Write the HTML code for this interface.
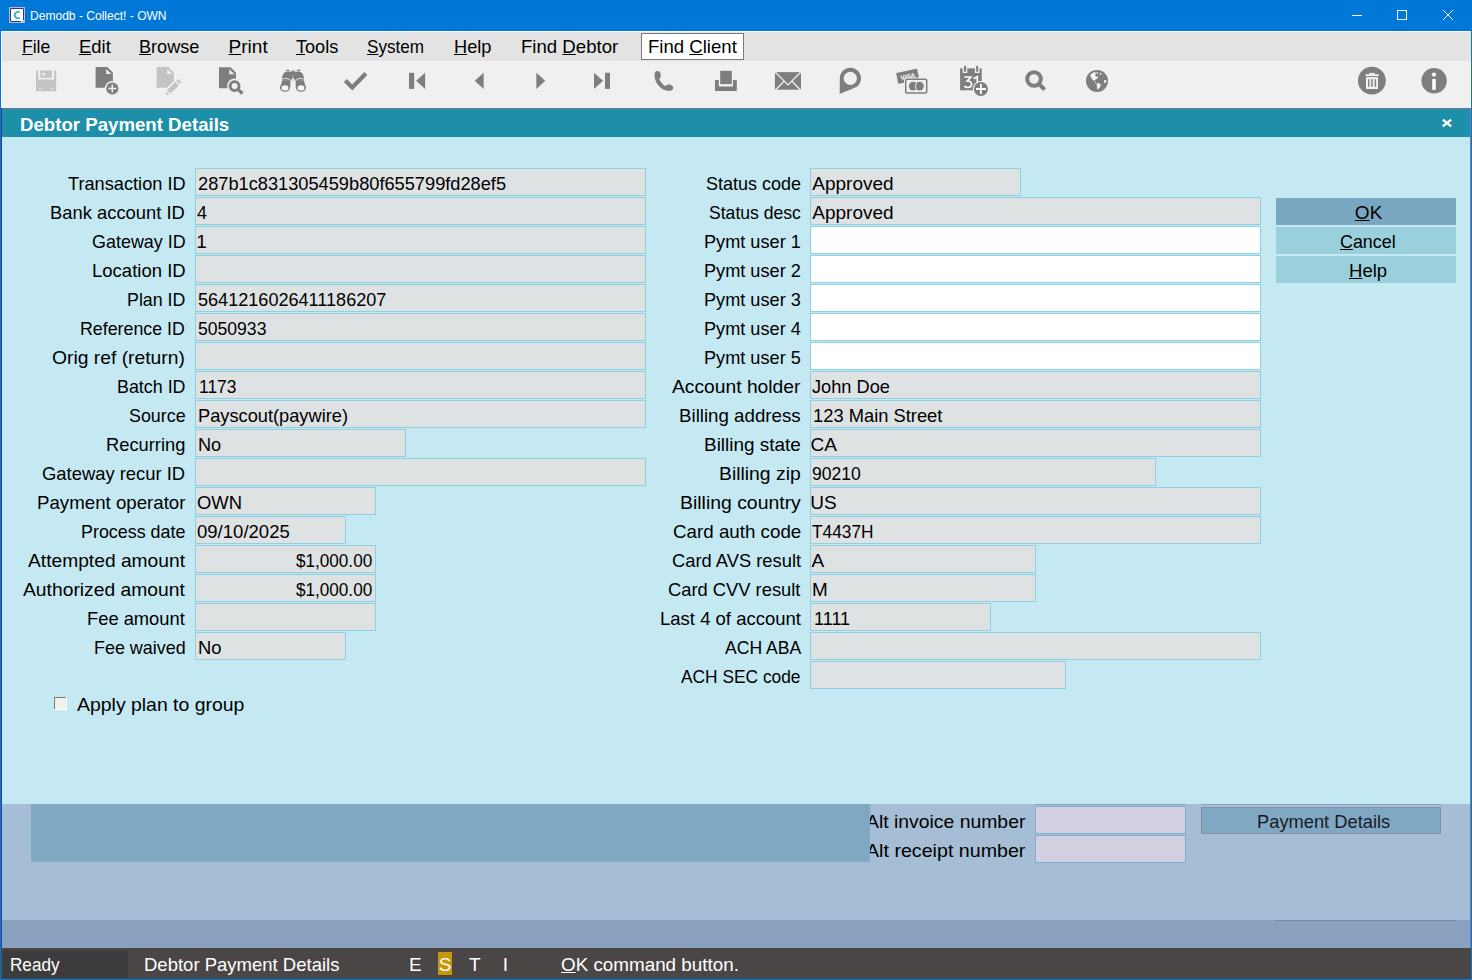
<!DOCTYPE html>
<html><head><meta charset="utf-8"><style>
html,body{margin:0;padding:0;width:1472px;height:980px;overflow:hidden;background:#c5e9f2;}
body{position:relative;font-family:"Liberation Sans", sans-serif;}
body>div,body>svg{position:absolute;}
.t{white-space:pre;line-height:24px;transform-origin:0 0;}
u{text-decoration:underline;text-underline-offset:1px;}
</style></head><body>
<div style="left:0px;top:0px;width:1472px;height:31px;background:#0078d7;"></div>
<svg style="left:9px;top:7px" width="16" height="16" viewBox="0 0 16 16"><rect x="0" y="0" width="16" height="16" fill="#ffffff"/><rect x="0.5" y="0.5" width="15" height="15" fill="none" stroke="#b9b9d6" stroke-width="1"/><path d="M1.5 13 V1.5 H14.5 V13.2 M1.5 12 V14.5 H12.2" fill="none" stroke="#2c3b7c" stroke-width="1"/><path d="M10.7 5.5 A3.15 3.15 0 1 0 10.7 10.7" fill="none" stroke="#3aaebe" stroke-width="1.7"/><rect x="13.5" y="13.5" width="1.2" height="1.2" fill="#45b5c5"/></svg>
<div class="t" style="left:30.20px;top:4.43px;font-size:13.2px;color:#fff;transform:scaleX(0.9136);">Demodb - Collect! - OWN</div>
<svg style="left:1340px;top:0px" width="132" height="31"><g stroke="#fff" stroke-width="1" fill="none"><line x1="12" y1="15.5" x2="22" y2="15.5"/><rect x="57.5" y="10.5" width="9" height="9"/><line x1="103" y1="10" x2="113" y2="20"/><line x1="113" y1="10" x2="103" y2="20"/></g></svg>
<div style="left:1px;top:31px;width:1470px;height:1px;background:#fbf7f5;"></div>
<div style="left:1px;top:32px;width:1470px;height:29px;background:#e3e3e3;"></div>
<div style="left:1px;top:32px;width:1px;height:29px;background:#fbf7f5;"></div>
<div style="left:641px;top:33px;width:103px;height:27px;background:#fff;border:1px solid #7a7a7a;box-sizing:border-box"></div>
<div class="t" style="left:22.10px;top:35.42px;font-size:19px;color:#000;transform:scaleX(0.9237);"><u>F</u>ile</div>
<div class="t" style="left:79.20px;top:35.42px;font-size:19px;color:#000;transform:scaleX(0.9717);"><u>E</u>dit</div>
<div class="t" style="left:139.20px;top:35.42px;font-size:19px;color:#000;transform:scaleX(0.9532);"><u>B</u>rowse</div>
<div class="t" style="left:228.60px;top:35.42px;font-size:19px;color:#000;"><u>P</u>rint</div>
<div class="t" style="left:296.10px;top:35.42px;font-size:19px;color:#000;transform:scaleX(0.9512);"><u>T</u>ools</div>
<div class="t" style="left:367.40px;top:35.42px;font-size:19px;color:#000;transform:scaleX(0.9011);"><u>S</u>ystem</div>
<div class="t" style="left:453.60px;top:35.42px;font-size:19px;color:#000;transform:scaleX(0.9593);"><u>H</u>elp</div>
<div class="t" style="left:521.00px;top:35.42px;font-size:19px;color:#000;transform:scaleX(0.9791);">Find <u>D</u>ebtor</div>
<div class="t" style="left:647.90px;top:35.42px;font-size:19px;color:#000;transform:scaleX(0.9778);">Find <u>C</u>lient</div>
<div style="left:1px;top:61px;width:1470px;height:47px;background:#f0f0f0;"></div>
<div style="left:1px;top:61px;width:1px;height:47px;background:#fbf7f5;"></div>
<div style="left:1470px;top:61px;width:1px;height:47px;background:#fbf7f5;"></div>
<div style="left:1px;top:108px;width:1470px;height:1px;background:#7c6f9a;"></div>
<div style="left:1px;top:109px;width:1469px;height:28px;background:#1e8fa8;"></div>
<div class="t" style="left:20.10px;top:113.42px;font-size:19px;color:#fff;font-weight:bold;transform:scaleX(0.9809);">Debtor Payment Details</div>
<svg style="left:1440px;top:117px" width="14" height="12"><g stroke="#fff" stroke-width="2.4"><line x1="2.8" y1="2.6" x2="11.2" y2="9.4"/><line x1="11.2" y1="2.6" x2="2.8" y2="9.4"/></g></svg>
<div style="left:1px;top:137px;width:1469px;height:667px;background:#c5e9f2;"></div>
<div style="left:195px;top:168px;width:451px;height:28px;background:#dfe2e3;border:1px solid #8fd0e0;box-sizing:border-box"></div>
<div class="t" style="left:67.60px;top:172.42px;font-size:19px;color:#000;transform:scaleX(0.9574);">Transaction ID</div>
<div class="t" style="left:198.00px;top:172.42px;font-size:19px;color:#000;transform:scaleX(0.9591);">287b1c831305459b80f655799fd28ef5</div>
<div style="left:195px;top:197px;width:451px;height:28px;background:#dfe2e3;border:1px solid #8fd0e0;box-sizing:border-box"></div>
<div class="t" style="left:50.40px;top:201.42px;font-size:19px;color:#000;transform:scaleX(0.9669);">Bank account ID</div>
<div class="t" style="left:196.90px;top:201.42px;font-size:19px;color:#000;transform:scaleX(0.9388);">4</div>
<div style="left:195px;top:226px;width:451px;height:28px;background:#dfe2e3;border:1px solid #8fd0e0;box-sizing:border-box"></div>
<div class="t" style="left:91.50px;top:230.42px;font-size:19px;color:#000;transform:scaleX(0.9438);">Gateway ID</div>
<div class="t" style="left:196.13px;top:230.42px;font-size:19px;color:#000;">1</div>
<div style="left:195px;top:255px;width:451px;height:28px;background:#dfe2e3;border:1px solid #8fd0e0;box-sizing:border-box"></div>
<div class="t" style="left:91.50px;top:259.42px;font-size:19px;color:#000;transform:scaleX(0.9746);">Location ID</div>
<div style="left:195px;top:284px;width:451px;height:28px;background:#dfe2e3;border:1px solid #8fd0e0;box-sizing:border-box"></div>
<div class="t" style="left:126.80px;top:288.42px;font-size:19px;color:#000;transform:scaleX(0.9371);">Plan ID</div>
<div class="t" style="left:198.00px;top:288.42px;font-size:19px;color:#000;transform:scaleX(0.9516);">5641216026411186207</div>
<div style="left:195px;top:313px;width:451px;height:28px;background:#dfe2e3;border:1px solid #8fd0e0;box-sizing:border-box"></div>
<div class="t" style="left:80.40px;top:317.42px;font-size:19px;color:#000;transform:scaleX(0.9361);">Reference ID</div>
<div class="t" style="left:198.00px;top:317.42px;font-size:19px;color:#000;transform:scaleX(0.9249);">5050933</div>
<div style="left:195px;top:342px;width:451px;height:28px;background:#dfe2e3;border:1px solid #8fd0e0;box-sizing:border-box"></div>
<div class="t" style="left:52.30px;top:346.42px;font-size:19px;color:#000;transform:scaleX(1.0152);">Orig ref (return)</div>
<div style="left:195px;top:371px;width:451px;height:28px;background:#dfe2e3;border:1px solid #8fd0e0;box-sizing:border-box"></div>
<div class="t" style="left:116.70px;top:375.42px;font-size:19px;color:#000;transform:scaleX(0.9401);">Batch ID</div>
<div class="t" style="left:198.60px;top:375.42px;font-size:19px;color:#000;transform:scaleX(0.9155);">1173</div>
<div style="left:195px;top:400px;width:451px;height:28px;background:#dfe2e3;border:1px solid #8fd0e0;box-sizing:border-box"></div>
<div class="t" style="left:128.60px;top:404.42px;font-size:19px;color:#000;transform:scaleX(0.9405);">Source</div>
<div class="t" style="left:198.00px;top:404.42px;font-size:19px;color:#000;transform:scaleX(0.9598);">Payscout(paywire)</div>
<div style="left:195px;top:429px;width:211px;height:28px;background:#dfe2e3;border:1px solid #8fd0e0;box-sizing:border-box"></div>
<div class="t" style="left:105.80px;top:433.42px;font-size:19px;color:#000;transform:scaleX(0.9640);">Recurring</div>
<div class="t" style="left:198.00px;top:433.42px;font-size:19px;color:#000;transform:scaleX(0.9558);">No</div>
<div style="left:195px;top:458px;width:451px;height:28px;background:#dfe2e3;border:1px solid #8fd0e0;box-sizing:border-box"></div>
<div class="t" style="left:42.10px;top:462.42px;font-size:19px;color:#000;transform:scaleX(0.9681);">Gateway recur ID</div>
<div style="left:195px;top:487px;width:181px;height:28px;background:#dfe2e3;border:1px solid #8fd0e0;box-sizing:border-box"></div>
<div class="t" style="left:36.70px;top:491.42px;font-size:19px;color:#000;transform:scaleX(0.9831);">Payment operator</div>
<div class="t" style="left:197.30px;top:491.42px;font-size:19px;color:#000;transform:scaleX(0.9687);">OWN</div>
<div style="left:195px;top:516px;width:151px;height:28px;background:#dfe2e3;border:1px solid #8fd0e0;box-sizing:border-box"></div>
<div class="t" style="left:80.80px;top:520.42px;font-size:19px;color:#000;transform:scaleX(0.9413);">Process date</div>
<div class="t" style="left:197.30px;top:520.42px;font-size:19px;color:#000;transform:scaleX(0.9759);">09/10/2025</div>
<div style="left:195px;top:545px;width:181px;height:28px;background:#dfe2e3;border:1px solid #8fd0e0;box-sizing:border-box"></div>
<div class="t" style="left:28.20px;top:549.42px;font-size:19px;color:#000;transform:scaleX(1.0111);">Attempted amount</div>
<div class="t" style="left:296.20px;top:549.42px;font-size:19px;color:#000;transform:scaleX(0.9012);">$1,000.00</div>
<div style="left:195px;top:574px;width:181px;height:28px;background:#dfe2e3;border:1px solid #8fd0e0;box-sizing:border-box"></div>
<div class="t" style="left:23.30px;top:578.42px;font-size:19px;color:#000;transform:scaleX(1.0150);">Authorized amount</div>
<div class="t" style="left:296.20px;top:578.42px;font-size:19px;color:#000;transform:scaleX(0.9012);">$1,000.00</div>
<div style="left:195px;top:603px;width:181px;height:28px;background:#dfe2e3;border:1px solid #8fd0e0;box-sizing:border-box"></div>
<div class="t" style="left:87.40px;top:607.42px;font-size:19px;color:#000;transform:scaleX(0.9644);">Fee amount</div>
<div style="left:195px;top:632px;width:151px;height:28px;background:#dfe2e3;border:1px solid #8fd0e0;box-sizing:border-box"></div>
<div class="t" style="left:93.50px;top:636.42px;font-size:19px;color:#000;transform:scaleX(0.9436);">Fee waived</div>
<div class="t" style="left:197.70px;top:636.42px;font-size:19px;color:#000;transform:scaleX(0.9682);">No</div>
<div style="left:810px;top:168px;width:211px;height:28px;background:#dfe2e3;border:1px solid #8fd0e0;box-sizing:border-box"></div>
<div class="t" style="left:705.70px;top:172.42px;font-size:19px;color:#000;transform:scaleX(0.9475);">Status code</div>
<div class="t" style="left:812.30px;top:172.42px;font-size:19px;color:#000;">Approved</div>
<div style="left:810px;top:197px;width:451px;height:28px;background:#dfe2e3;border:1px solid #8fd0e0;box-sizing:border-box"></div>
<div class="t" style="left:708.90px;top:201.42px;font-size:19px;color:#000;transform:scaleX(0.9257);">Status desc</div>
<div class="t" style="left:812.30px;top:201.42px;font-size:19px;color:#000;">Approved</div>
<div style="left:810px;top:226px;width:451px;height:28px;background:#ffffff;border:1px solid #8fd0e0;box-sizing:border-box"></div>
<div class="t" style="left:704.00px;top:230.42px;font-size:19px;color:#000;transform:scaleX(0.9550);">Pymt user 1</div>
<div style="left:810px;top:255px;width:451px;height:28px;background:#ffffff;border:1px solid #8fd0e0;box-sizing:border-box"></div>
<div class="t" style="left:704.00px;top:259.42px;font-size:19px;color:#000;transform:scaleX(0.9550);">Pymt user 2</div>
<div style="left:810px;top:284px;width:451px;height:28px;background:#ffffff;border:1px solid #8fd0e0;box-sizing:border-box"></div>
<div class="t" style="left:704.00px;top:288.42px;font-size:19px;color:#000;transform:scaleX(0.9550);">Pymt user 3</div>
<div style="left:810px;top:313px;width:451px;height:28px;background:#ffffff;border:1px solid #8fd0e0;box-sizing:border-box"></div>
<div class="t" style="left:704.00px;top:317.42px;font-size:19px;color:#000;transform:scaleX(0.9550);">Pymt user 4</div>
<div style="left:810px;top:342px;width:451px;height:28px;background:#ffffff;border:1px solid #8fd0e0;box-sizing:border-box"></div>
<div class="t" style="left:704.00px;top:346.42px;font-size:19px;color:#000;transform:scaleX(0.9550);">Pymt user 5</div>
<div style="left:810px;top:371px;width:451px;height:28px;background:#dfe2e3;border:1px solid #8fd0e0;box-sizing:border-box"></div>
<div class="t" style="left:672.40px;top:375.42px;font-size:19px;color:#000;transform:scaleX(1.0132);">Account holder</div>
<div class="t" style="left:812.40px;top:375.42px;font-size:19px;color:#000;transform:scaleX(0.9579);">John Doe</div>
<div style="left:810px;top:400px;width:451px;height:28px;background:#dfe2e3;border:1px solid #8fd0e0;box-sizing:border-box"></div>
<div class="t" style="left:679.20px;top:404.42px;font-size:19px;color:#000;transform:scaleX(0.9842);">Billing address</div>
<div class="t" style="left:813.30px;top:404.42px;font-size:19px;color:#000;transform:scaleX(0.9647);">123 Main Street</div>
<div style="left:810px;top:429px;width:451px;height:28px;background:#dfe2e3;border:1px solid #8fd0e0;box-sizing:border-box"></div>
<div class="t" style="left:703.90px;top:433.42px;font-size:19px;color:#000;transform:scaleX(0.9971);">Billing state</div>
<div class="t" style="left:810.59px;top:433.42px;font-size:19px;color:#000;">CA</div>
<div style="left:810px;top:458px;width:346px;height:28px;background:#dfe2e3;border:1px solid #8fd0e0;box-sizing:border-box"></div>
<div class="t" style="left:719.10px;top:462.42px;font-size:19px;color:#000;transform:scaleX(1.0178);">Billing zip</div>
<div class="t" style="left:812.40px;top:462.42px;font-size:19px;color:#000;transform:scaleX(0.9239);">90210</div>
<div style="left:810px;top:487px;width:451px;height:28px;background:#dfe2e3;border:1px solid #8fd0e0;box-sizing:border-box"></div>
<div class="t" style="left:680.00px;top:491.42px;font-size:19px;color:#000;transform:scaleX(1.0213);">Billing country</div>
<div class="t" style="left:810.29px;top:491.42px;font-size:19px;color:#000;">US</div>
<div style="left:810px;top:516px;width:451px;height:28px;background:#dfe2e3;border:1px solid #8fd0e0;box-sizing:border-box"></div>
<div class="t" style="left:672.50px;top:520.42px;font-size:19px;color:#000;transform:scaleX(0.9876);">Card auth code</div>
<div class="t" style="left:812.40px;top:520.42px;font-size:19px;color:#000;transform:scaleX(0.9113);">T4437H</div>
<div style="left:810px;top:545px;width:226px;height:28px;background:#dfe2e3;border:1px solid #8fd0e0;box-sizing:border-box"></div>
<div class="t" style="left:671.70px;top:549.42px;font-size:19px;color:#000;transform:scaleX(0.9652);">Card AVS result</div>
<div class="t" style="left:811.50px;top:549.42px;font-size:19px;color:#000;">A</div>
<div style="left:810px;top:574px;width:226px;height:28px;background:#dfe2e3;border:1px solid #8fd0e0;box-sizing:border-box"></div>
<div class="t" style="left:668.40px;top:578.42px;font-size:19px;color:#000;transform:scaleX(0.9645);">Card CVV result</div>
<div class="t" style="left:812.40px;top:578.42px;font-size:19px;color:#000;transform:scaleX(0.9926);">M</div>
<div style="left:810px;top:603px;width:181px;height:28px;background:#dfe2e3;border:1px solid #8fd0e0;box-sizing:border-box"></div>
<div class="t" style="left:659.80px;top:607.42px;font-size:19px;color:#000;transform:scaleX(0.9742);">Last 4 of account</div>
<div class="t" style="left:813.90px;top:607.42px;font-size:19px;color:#000;transform:scaleX(0.9488);">1111</div>
<div style="left:810px;top:632px;width:451px;height:28px;background:#dfe2e3;border:1px solid #8fd0e0;box-sizing:border-box"></div>
<div class="t" style="left:724.60px;top:636.42px;font-size:19px;color:#000;transform:scaleX(0.9252);">ACH ABA</div>
<div style="left:810px;top:661px;width:256px;height:28px;background:#dfe2e3;border:1px solid #8fd0e0;box-sizing:border-box"></div>
<div class="t" style="left:681.30px;top:665.42px;font-size:19px;color:#000;transform:scaleX(0.9125);">ACH SEC code</div>
<div style="left:1276px;top:198px;width:180px;height:27px;background:#79a7c1;"></div>
<div class="t" style="left:1354.87px;top:201.42px;font-size:19px;color:#000;"><u>O</u>K</div>
<div style="left:1276px;top:227px;width:180px;height:27px;background:#9acfdc;"></div>
<div class="t" style="left:1340.30px;top:230.42px;font-size:19px;color:#000;transform:scaleX(0.9402);"><u>C</u>ancel</div>
<div style="left:1276px;top:256px;width:180px;height:27px;background:#9acfdc;"></div>
<div class="t" style="left:1349.20px;top:259.42px;font-size:19px;color:#000;transform:scaleX(0.9746);"><u>H</u>elp</div>
<svg style="left:54px;top:697px" width="13" height="13"><rect x="0" y="0" width="13" height="13" fill="#ffffff"/><rect x="0" y="0" width="12" height="12" fill="#7a7a7a"/><rect x="1" y="1" width="11" height="11" fill="#f0f0f0"/></svg>
<div class="t" style="left:77.10px;top:693.42px;font-size:19px;color:#000;transform:scaleX(1.0224);">Apply plan to group</div>
<div style="left:1px;top:804px;width:1469px;height:116px;background:#a5bed6;"></div>
<div class="t" style="left:865.80px;top:810.42px;font-size:19px;color:#000;transform:scaleX(1.0197);">Alt invoice number</div>
<div class="t" style="left:865.80px;top:839.42px;font-size:19px;color:#000;transform:scaleX(1.0338);">Alt receipt number</div>
<div style="left:31px;top:804px;width:839px;height:58px;background:#80a8c3;"></div>
<div style="left:1035px;top:804px;width:151px;height:1px;background:#7fa6c2;"></div>
<div style="left:1035px;top:806px;width:151px;height:28px;background:#d2d0e0;border:1px solid #7fb0cc;box-sizing:border-box"></div>
<div style="left:1035px;top:835px;width:151px;height:28px;background:#d2d0e0;border:1px solid #7fb0cc;box-sizing:border-box"></div>
<div style="left:1201px;top:804px;width:240px;height:1px;background:#7fa6c2;"></div>
<div style="left:1201px;top:807px;width:240px;height:27px;background:#80a8c3;border:1px solid #8c8aa4;box-sizing:border-box"></div>
<div class="t" style="left:1256.80px;top:810.42px;font-size:19px;color:#1a1a2a;transform:scaleX(0.9630);">Payment Details</div>
<div style="left:1px;top:920px;width:1469px;height:28px;background:#8ba1c0;"></div>
<div style="left:1275px;top:920px;width:181px;height:1px;background:#6f8db0;"></div>
<div style="left:1px;top:948px;width:1470px;height:31px;background:#4a4646;"></div>
<div style="left:3px;top:950px;width:125px;height:28px;background:#3d3c3d;"></div>
<div class="t" style="left:9.60px;top:953.42px;font-size:19px;color:#fff;transform:scaleX(0.9015);">Ready</div>
<div class="t" style="left:144.30px;top:953.42px;font-size:19px;color:#fff;transform:scaleX(0.9739);">Debtor Payment Details</div>
<div style="left:438px;top:952px;width:14px;height:23px;background:#c8960a;"></div>
<div class="t" style="left:408.96px;top:953.42px;font-size:19px;color:#fff;">E</div>
<div class="t" style="left:438.66px;top:953.42px;font-size:19px;color:#fff;">S</div>
<div class="t" style="left:469.10px;top:953.42px;font-size:19px;color:#fff;">T</div>
<div class="t" style="left:502.86px;top:953.42px;font-size:19px;color:#fff;">I</div>
<div class="t" style="left:560.50px;top:953.42px;font-size:19px;color:#fff;transform:scaleX(0.9908);"><u>O</u>K command button.</div>
<div style="left:1px;top:108px;width:1px;height:840px;background:#3d3f7a;"></div>
<div style="left:1470px;top:108px;width:1px;height:840px;background:#7c7a9a;"></div>
<div style="left:0px;top:0px;width:1px;height:980px;background:#0078d7;"></div>
<div style="left:1471px;top:0px;width:1px;height:980px;background:#0078d7;"></div>
<div style="left:0px;top:979px;width:1472px;height:1px;background:#0078d7;"></div>
<svg style="left:0;top:61px" width="1472" height="47" viewBox="0 61 1472 47"><path fill="#c4c4c4" d="M36 70.5 H38.2 V79.5 H54.1 V70.5 H56.2 V91.2 H36 Z"/><rect x="40.2" y="70.5" width="11.7" height="7.3" fill="#c4c4c4"/><rect x="42.1" y="73.1" width="2.8" height="2.4" fill="#f0f0f0"/><rect x="38.9" y="87.9" width="2.2" height="1" fill="#f0f0f0"/><rect x="50.9" y="87.9" width="2.2" height="1" fill="#f0f0f0"/><path fill="#7f7e7c" d="M95.6 67.1 H107.4 L112.9 72.6 V87.8 H95.6 Z"/><path fill="#f0f0f0" d="M106.2 69.1 V74.1 H111.4 Z"/><circle cx="112.3" cy="88.5" r="7.6" fill="#f0f0f0"/><circle cx="112.3" cy="88.5" r="6.1" fill="#7f7e7c"/><path d="M108.3 88.5 H116.3 M112.3 84.5 V92.5" stroke="#f0f0f0" stroke-width="1.5"/><path fill="#c4c4c4" d="M156.6 67.1 H168.3 L173.8 72.6 V81 L166.8 87.8 H156.6 Z"/><path fill="#f0f0f0" d="M167.1 69.1 V74.1 H172.3 Z"/><path d="M168.75 91.75 L177.25 83.5" stroke="#c4c4c4" stroke-width="4.8"/><path d="M178.0 82.3 L179.75 80.6" stroke="#c4c4c4" stroke-width="4.8"/><path d="M166 91.4 L166 94.9 L169.6 94.5 Z" fill="#c4c4c4"/><path fill="#7f7e7c" d="M219 67.2 H230.5 L236 72.7 V88.2 H219 Z"/><path fill="#f0f0f0" d="M229.3 69.2 V74.2 H234.5 Z"/><circle cx="234.6" cy="86.1" r="7.5" fill="#f0f0f0"/><path d="M238.3 89.6 L242.4 93.5" stroke="#7f7e7c" stroke-width="3.3"/><circle cx="234.6" cy="86.1" r="4.5" fill="none" stroke="#7f7e7c" stroke-width="2.9"/><path fill="#7f7e7c" d="M281.8 80 C282.3 75.5 283.3 72.6 286 72.1 L291.6 71.4 L293 70.1 L294.4 71.4 L300 72.1 C302.7 72.6 303.7 75.5 304.2 80 L294.7 81.2 L294.3 79 L293 77.8 L291.7 79 L291.3 81.2 Z"/><rect x="286" y="69.7" width="3.3" height="1.6" fill="#7f7e7c"/><rect x="297" y="69.7" width="3.3" height="1.6" fill="#7f7e7c"/><path d="M293 74.8 V78.4" stroke="#a8a8a8" stroke-width="1"/><path fill="#7f7e7c" d="M282.2 80.3 H290.3 V88 H280 Z M295.7 80.3 H303.8 L306 88 H295.7 Z"/><ellipse cx="285" cy="87.9" rx="5" ry="3.95" fill="#7f7e7c"/><ellipse cx="301" cy="87.9" rx="5" ry="3.95" fill="#7f7e7c"/><ellipse cx="285" cy="87.9" rx="3.5" ry="2.6" fill="#f6f6f6"/><ellipse cx="301" cy="87.9" rx="3.5" ry="2.6" fill="#f6f6f6"/><path d="M281 79.9 Q286 76.3 290.9 80.7 M295.1 80.7 Q300 76.3 305 79.9" stroke="#f0f0f0" stroke-width="0.9" fill="none"/><path d="M345.3 80.4 L352.3 87.4 L365.8 73.6" stroke="#7f7e7c" stroke-width="4.3" fill="none" stroke-linejoin="miter"/><rect x="409" y="72.8" width="5.2" height="16.1" fill="#7f7e7c"/><path fill="#7f7e7c" d="M416.1 80.85 L425.1 72.8 V88.9 Z"/><path fill="#7f7e7c" d="M474.7 80.85 L483.7 72.8 V88.9 Z"/><path fill="#7f7e7c" d="M545.3 80.85 L536.3 72.8 V88.9 Z"/><rect x="605" y="72.8" width="5" height="16.1" fill="#7f7e7c"/><path fill="#7f7e7c" d="M603 80.85 L594 72.8 V88.9 Z"/><path fill="#7f7e7c" d="M657.6 70.9 C655.5 70.9 654.5 72.5 654.5 75 C654.6 82 659.5 89.5 667.5 90.8 C670.8 91.3 673.3 90 673.3 87.8 C673.3 85.6 670.5 84.3 668.4 84.4 C667 84.5 666 85.5 665.6 86.3 C662.8 84.5 660.6 81.8 659.2 78.9 C660.2 78.2 660.9 76.8 660.8 75.2 C660.7 72.6 659.5 70.9 657.6 70.9 Z"/><path fill="#7f7e7c" d="M715 80 H718.8 V86.5 H733 V80 H736.8 V90.9 H715 Z"/><rect x="720.2" y="70.8" width="11.6" height="13.3" fill="#7f7e7c"/><rect x="774.9" y="72.1" width="26.1" height="17.6" fill="#7f7e7c"/><path d="M774.6 71.5 L788 84.9 L801.4 71.5 M775.2 90.2 L784.1 81.3 M800.8 90.2 L791.9 81.3" stroke="#f0f0f0" stroke-width="1.3" fill="none"/><path fill="#7f7e7c" d="M839.7 93.9 L839.8 78.5 A10.6 10.6 0 1 1 856.5 87 Z"/><circle cx="850.3" cy="78.3" r="6.6" fill="#f0f0f0"/><path fill="#7f7e7c" d="M896.6 73 L916.2 68.8 Q917 68.7 917.2 69.5 L919.3 79.2 L899.2 83.8 Q898.3 84 898.1 83.2 L896.2 73.8 Q896.1 73.1 896.6 73 Z"/><text x="901" y="80" font-family="Liberation Sans" font-weight="bold" font-size="6.4" fill="#fff" transform="rotate(-11 901 80)">VISA</text><rect x="904" y="77.6" width="24.4" height="17" rx="2" fill="#f0f0f0"/><rect x="905.7" y="79.3" width="21" height="13.6" rx="1.2" fill="none" stroke="#7f7e7c" stroke-width="1.5"/><circle cx="913.1" cy="86.1" r="4.3" fill="#7f7e7c"/><circle cx="919.5" cy="86.1" r="4.3" fill="#7f7e7c"/><path d="M916.3 82.8 Q914.6 86.1 916.3 89.4" stroke="#fff" stroke-width="0.8" fill="none"/><rect x="960.1" y="68.4" width="21.6" height="21.9" fill="#7f7e7c"/><rect x="962.7" y="65" width="4.6" height="8" fill="#f0f0f0"/><rect x="974.9" y="65" width="4.6" height="8" fill="#f0f0f0"/><rect x="964" y="65.9" width="2.1" height="5.8" fill="#7f7e7c"/><rect x="976.1" y="65.9" width="2.1" height="5.8" fill="#7f7e7c"/><path d="M964.3 77 H970.8 L967.3 81 C969.9 80.8 971.6 82.3 971.6 84.3 C971.6 86.3 969.9 87.5 967.8 87.5 C966.4 87.5 965.1 87 964.2 86.2" stroke="#fff" stroke-width="1.7" fill="none"/><path d="M973.6 78.8 L977.3 76.8 V90" stroke="#fff" stroke-width="1.7" fill="none"/><circle cx="980.9" cy="89" r="8.1" fill="#f0f0f0"/><circle cx="980.9" cy="89" r="7" fill="#7f7e7c"/><path d="M976 89 H986 M980.9 84 V94" stroke="#fff" stroke-width="1.8"/><circle cx="1034" cy="79" r="6.8" fill="none" stroke="#7f7e7c" stroke-width="4"/><path d="M1038.5 83.5 L1044.6 89.6" stroke="#7f7e7c" stroke-width="4"/><circle cx="1097" cy="80.9" r="11" fill="#7f7e7c"/><path fill="#f4f4f4" d="M1090 75.4 L1092 73.3 L1095.4 71.7 L1095.8 74.1 L1095.1 75.2 L1096.5 77 L1098.6 76.2 L1097.8 78.1 L1095.4 79.7 L1093.6 81 L1092 79.1 Z"/><path fill="#f4f4f4" d="M1096.7 72 H1097.9 V73.8 H1096.7 Z M1099.7 72.8 L1101.2 73.2 L1101 74.9 L1099.9 74.5 Z M1094.9 81.8 H1095.9 V82.9 H1094.9 Z"/><path fill="#f4f4f4" d="M1096.5 83.4 L1098.9 83.1 L1101 85.2 L1099.7 87.6 L1097.3 90 L1097 86.6 Z"/><path fill="#f4f4f4" d="M1104.2 80.3 L1106.3 79.9 L1106.2 82.6 L1104.3 83.1 L1103.9 81.8 Z"/><circle cx="1371.9" cy="80.7" r="13.9" fill="#7e7d80"/><rect x="1365.5" y="74.2" width="13.2" height="1.9" fill="#f2f2f2"/><rect x="1369.2" y="72.9" width="5.4" height="1.6" fill="#f2f2f2"/><rect x="1366" y="77.1" width="12" height="11.9" fill="#f2f2f2"/><rect x="1368.1" y="79.2" width="1.4" height="7.6" fill="#7e7d80"/><rect x="1371.2" y="79.2" width="1.5" height="7.6" fill="#7e7d80"/><rect x="1374.7" y="79.2" width="1.4" height="7.6" fill="#7e7d80"/><circle cx="1434.1" cy="80.8" r="12.7" fill="#7f7e7c"/><circle cx="1434" cy="74.6" r="2.1" fill="#fff"/><rect x="1432.2" y="79" width="3.6" height="10.8" fill="#fff"/></svg>
</body></html>
